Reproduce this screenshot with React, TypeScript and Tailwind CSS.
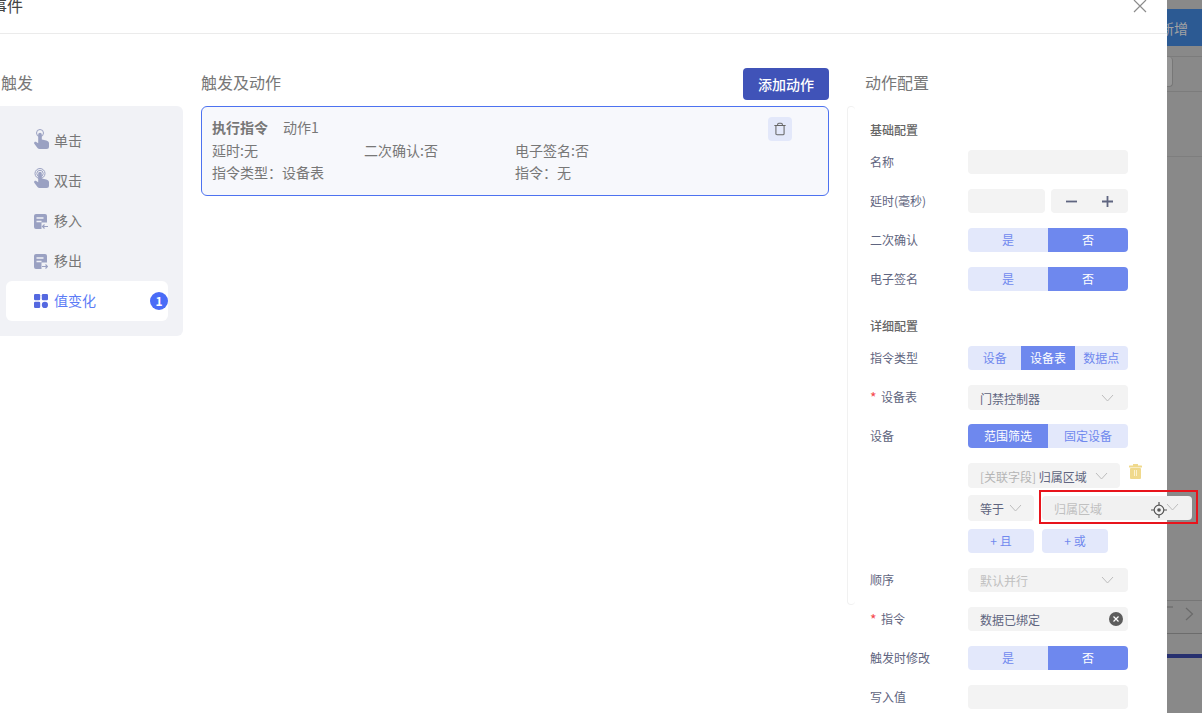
import { Trash } from 'lucide-react';

const Chevron = ({ color = '#bdbdbd' }: { color?: string }) => (
  <svg width="13" height="8" viewBox="0 0 13 8" fill="none" className="shrink-0">
    <path d="M1 1l5.5 6L12 1" stroke={color} strokeWidth="1" />
  </svg>
);

const TapIcon = ({ double }: { double?: boolean }) => (
  <svg width="15" height="20" viewBox="0 0 15 20" fill="none">
    {double && <circle cx="6" cy="5.500" r="5" stroke="#9aa1c2" strokeWidth="1" />}
    <circle cx="6" cy={double ? 5.500 : 4} r={double ? 3.200 : 3.500} stroke="#9aa1c2" strokeWidth="1" />
    <path
      d="M4.200 5.500a1.800 1.800 0 0 1 3.600 0V10.500l4.500 1c1.500.4 2.700 1.300 2.700 2.800V17.500a2.500 2.500 0 0 1-2.500 2.500H5.500a2.500 2.500 0 0 1-2-1L.3 14.800c-.8-1.200.6-2.700 1.900-1.800l2 1.300z"
      fill="#9aa1c2"
    />
  </svg>
);

const DocIcon = ({ out }: { out?: boolean }) => (
  <svg width="14" height="15" viewBox="0 0 14 15" fill="none">
    <path d="M2 0h9a2 2 0 0 1 2 2V8.500H7.500V15H2a2 2 0 0 1-2-2V2a2 2 0 0 1 2-2z" fill="#9aa1c2" />
    <path d="M2.500 4h7M2.500 7.500h5" stroke="#f1f2f6" strokeWidth="1.500" />
    {out ? (
      <path d="M8 12.500h5.500M11.500 10.500l2 2-2 2" stroke="#9aa1c2" strokeWidth="1.200" />
    ) : (
      <path d="M14 12.500H8.500M10.500 10.500l-2 2 2 2" stroke="#9aa1c2" strokeWidth="1.200" />
    )}
  </svg>
);

const GridIcon = () => (
  <svg width="14" height="14" viewBox="0 0 14 14" fill="#5468e0">
    <rect width="6.200" height="6.200" rx="1.200" />
    <rect x="7.800" width="6.200" height="6.200" rx="1.200" />
    <rect y="7.800" width="6.200" height="6.200" rx="1.200" />
    <circle cx="10.900" cy="10.900" r="3.100" />
  </svg>
);

const YellowTrash = () => (
  <svg width="13" height="15" viewBox="0 0 13 15">
    <rect x="4" width="5" height="2" fill="#f0d98c" />
    <rect y="1.500" width="13" height="2" rx="0.500" fill="#f0d98c" />
    <rect x="1" y="4" width="11" height="11" rx="1" fill="#f0d98c" />
    <rect x="5" y="6" width="1" height="6" fill="#fbf1cf" />
    <rect x="7" y="6" width="1" height="6" fill="#fbf1cf" />
  </svg>
);

const triggers = [
  { label: '单击', icon: <TapIcon />, lift: '-translate-y-[2px]' },
  { label: '双击', icon: <TapIcon double />, lift: '-translate-y-[3px]' },
  { label: '移入', icon: <DocIcon />, lift: '' },
  { label: '移出', icon: <DocIcon out />, lift: '' },
];

const Field = ({ label, required, children }: { label: string; required?: boolean; children?: React.ReactNode }) => (
  <div className="flex items-start">
    <div className="flex h-6 w-[98px] items-center text-xs text-[#5f6580]">
      {required && <span className="w-[11px] text-sm leading-none text-[#f5484d]">*</span>}
      {label}
    </div>
    {children}
  </div>
);

const Blank = () => <div className="h-6 w-40 rounded bg-[#f3f3f3]" />;

const Segments = ({ items, active }: { items: string[]; active: number }) => (
  <div className="flex h-6 w-40 overflow-hidden rounded text-xs">
    {items.map((item, i) => (
      <div
        key={item}
        className={
          i === active
            ? 'flex flex-1 items-center justify-center bg-[#6e88ee] text-white'
            : 'flex flex-1 items-center justify-center bg-[#e3e8fb] text-[#7089ee]'
        }
      >
        {item}
      </div>
    ))}
  </div>
);

const SelectBox = ({ text, muted, tall }: { text: string; muted?: boolean; tall?: boolean }) => (
  <div className={`flex w-40 items-center justify-between rounded bg-[#f3f3f3] pl-3 pr-[14px] text-xs ${tall ? 'h-[25px]' : 'h-6'}`}>
    <span className={muted ? 'pt-0.5 text-[#c0c0c0]' : 'pt-0.5 text-[#5f6580]'}>{text}</span>
    <Chevron />
  </div>
);

export default function App() {
  return (
    <div className="flex h-[713px] w-[1202px] overflow-hidden bg-[#898989] font-['Noto_Sans_CJK_SC',sans-serif]">
      <div className="h-full w-[1167px] shrink-0 bg-white">
        <div className="flex h-[34px] items-start justify-between border-b border-[#ebebeb] pr-5">
          <span className="-ml-[9px] -mt-[7px] text-base leading-6 text-[#444]">事件</span>
          <svg width="14" height="14" viewBox="0 0 14 14" className="mt-[-1px]">
            <path d="M1 1l12 12M13 1L1 13" stroke="#8c8c8c" strokeWidth="1.200" />
          </svg>
        </div>

        <div className="flex pt-[34px]">
          <div className="w-[183px] shrink-0">
            <div className="mb-[6px] flex h-8 items-center pb-[5px] pl-px text-base text-[#777]">触发</div>
            <div className="h-[230px] rounded-r-md bg-[#f1f2f6] pl-[6px] pr-[15px] pt-[15px]">
              {triggers.map((t) => (
                <div key={t.label} className="flex h-10 items-center pl-[28px] text-sm text-[#777]">
                  <div className={`flex w-5 ${t.lift}`}>{t.icon}</div>
                  <span className="-mt-0.5">{t.label}</span>
                </div>
              ))}
              <div className="flex h-10 items-center rounded-md bg-white pl-[28px] text-sm text-[#5c7cf6]">
                <div className="flex w-5">
                  <GridIcon />
                </div>
                <span className="-mt-0.5 flex-1">值变化</span>
                <span className="flex h-[18px] w-[18px] items-center justify-center rounded-full bg-[#4a6cf7] text-xs font-bold text-white">
                  1
                </span>
              </div>
            </div>
          </div>

          <div className="ml-[18px] w-[628px] shrink-0">
            <div className="mb-[6px] flex h-8 items-center justify-between text-base text-[#777]">
              <span className="-mt-[5px]">触发及动作</span>
              <button className="flex h-8 w-[86px] items-center justify-center rounded bg-[#4053b8] text-sm font-medium text-white">
                添加动作
              </button>
            </div>
            <div className="relative h-[90px] rounded-md border border-[#4d72f0] bg-[#f7f8fc] pl-[10px] pt-[9px] text-sm leading-[22px] text-[#777]">
              <div className="flex">
                <span className="w-[71px] font-bold">执行指令</span>
                <span>动作1</span>
              </div>
              <div className="mt-px flex">
                <span className="w-[152px]">延时:无</span>
                <span className="w-[151px]">二次确认:否</span>
                <span>电子签名:否</span>
              </div>
              <div className="flex">
                <span className="w-[303px]">指令类型：设备表</span>
                <span>指令：无</span>
              </div>
              <div className="absolute left-[566px] top-[10px] flex h-6 w-6 items-center justify-center rounded bg-[#e3e8fa]">
                <Trash size={14} color="#666" strokeWidth={1.800} />
              </div>
            </div>
          </div>

          <div className="ml-[18px] mt-[38px] h-[499px] w-2 shrink-0 rounded-sm border border-r-0 border-[#f1f1f1]" />

          <div className="ml-[10px] flex-1">
            <div className="mb-[6px] flex h-8 items-center pb-[5px] text-base text-[#777]">动作配置</div>
            <div className="flex flex-col pl-[5px]">
              <div className="mt-3 flex h-6 items-center text-xs font-medium text-[#666]">基础配置</div>
              <div className="mt-2">
                <Field label="名称">
                  <Blank />
                </Field>
              </div>
              <div className="mt-[15px]">
                <Field label="延时(毫秒)">
                  <div className="flex w-40 justify-between">
                    <div className="h-6 w-[77px] rounded bg-[#f3f3f3]" />
                    <div className="flex h-6 w-[77px] items-center justify-between rounded bg-[#f3f3f3] pl-[15px] pr-[15px]">
                      <svg width="11" height="11" viewBox="0 0 11 11">
                        <path d="M0 5.500h11" stroke="#5f6580" strokeWidth="1.800" />
                      </svg>
                      <svg width="11" height="11" viewBox="0 0 11 11">
                        <path d="M0 5.500h11M5.500 0v11" stroke="#5f6580" strokeWidth="1.800" />
                      </svg>
                    </div>
                  </div>
                </Field>
              </div>
              <div className="mt-[15px]">
                <Field label="二次确认">
                  <Segments items={['是', '否']} active={1} />
                </Field>
              </div>
              <div className="mt-[15px]">
                <Field label="电子签名">
                  <Segments items={['是', '否']} active={1} />
                </Field>
              </div>

              <div className="mt-[23px] flex h-6 items-center text-xs font-medium text-[#666]">详细配置</div>
              <div className="mt-2">
                <Field label="指令类型">
                  <Segments items={['设备', '设备表', '数据点']} active={1} />
                </Field>
              </div>
              <div className="mt-[15px]">
                <Field label="设备表" required>
                  <SelectBox text="门禁控制器" tall />
                </Field>
              </div>
              <div className="mt-[14px]">
                <Field label="设备">
                  <Segments items={['范围筛选', '固定设备']} active={0} />
                </Field>
              </div>

              <div className="ml-[98px] mt-[15px] flex flex-col">
                <div className="flex items-start gap-[9px]">
                  <div className="flex h-[25px] w-[152px] items-center justify-between rounded bg-[#f3f3f3] pl-3 pr-[12px] text-xs">
                    <span className="pt-0.5 text-[#5f6580]">
                      <span className="text-[#b5b5b5]">[关联字段]</span> 归属区域
                    </span>
                    <Chevron />
                  </div>
                  <div className="pt-px">
                    <YellowTrash />
                  </div>
                </div>
                <div className="mt-[7px] flex items-center gap-2">
                  <div className="flex h-[26px] w-[66px] items-center justify-between rounded bg-[#f3f3f3] pl-3 pr-3 text-xs text-[#5f6580]">
                    <span className="pt-0.5">等于</span>
                    <Chevron />
                  </div>
                  <div className="relative flex h-6 w-[150px] items-center justify-between rounded bg-[#f1f1f1] pl-3 pr-[13px] text-xs text-[#c0c0c0]">
                    <span className="pt-0.5">归属区域</span>
                    <span className="-mt-[3px]">
                      <Chevron />
                    </span>
                    <div className="pointer-events-none absolute -bottom-1 -left-[3px] -right-[6px] -top-[6px] border-2 border-[#e8141c]" />
                    <svg width="16" height="16" viewBox="0 0 16 16" fill="none" className="absolute left-[109px] top-[6px]">
                      <circle cx="8" cy="8" r="4.800" stroke="#555" strokeWidth="1.200" />
                      <circle cx="8" cy="8" r="1.800" fill="#555" />
                      <path d="M8 0v3M8 13v3M0 8h3M13 8h3" stroke="#555" strokeWidth="1.200" />
                    </svg>
                  </div>
                </div>
                <div className="mt-2 flex gap-2 text-xs text-[#7089ee]">
                  <div className="flex h-6 w-[66px] items-center justify-center rounded bg-[#e3e8fb]">+ 且</div>
                  <div className="flex h-6 w-[66px] items-center justify-center rounded bg-[#e3e8fb]">+ 或</div>
                </div>
              </div>

              <div className="mt-[15px]">
                <Field label="顺序">
                  <SelectBox text="默认并行" muted />
                </Field>
              </div>
              <div className="mt-[15px]">
                <Field label="指令" required>
                  <div className="flex h-6 w-40 items-center justify-between rounded bg-[#f3f3f3] pl-3 pr-[5px] text-xs text-[#5f6580]">
                    <span className="pt-0.5">数据已绑定</span>
                    <span className="flex h-[14px] w-[14px] items-center justify-center rounded-full bg-[#5c5c5c]">
                      <svg width="6" height="6" viewBox="0 0 6 6">
                        <path d="M.5.500l5 5M5.500.500l-5 5" stroke="#fff" strokeWidth="1.200" />
                      </svg>
                    </span>
                  </div>
                </Field>
              </div>
              <div className="mt-[15px]">
                <Field label="触发时修改">
                  <Segments items={['是', '否']} active={1} />
                </Field>
              </div>
              <div className="mt-[15px]">
                <Field label="写入值">
                  <Blank />
                </Field>
              </div>
            </div>
          </div>
        </div>
      </div>

      <div className="flex-1 overflow-hidden">
        <div className="mt-[9px] flex h-[37px] items-center overflow-hidden bg-[#2c5a93] text-sm text-[#a3a3a3]">
          <span className="-ml-[7px] whitespace-nowrap">新增</span>
        </div>
        <div className="mt-[10px] h-[36px] border-b border-t border-[#7c7c7c]">
          <div className="h-[30px] w-[6px] rounded-r-sm border-b border-r border-[#777] bg-[#969696]" />
        </div>
        <div className="mt-[64px] h-px bg-[#7e7e7e]" />
        <div className="mt-[443px] h-[33px] border-t border-[#767676]">
          <div className="mt-[5px] h-[2px] w-[6px] bg-[#767676]" />
          <div className="-mt-[1px] flex justify-end pr-[8px]">
            <svg width="9" height="14" viewBox="0 0 9 14" fill="none">
              <path d="M1 1l6.500 6L1 13" stroke="#6a6a6a" strokeWidth="1.200" />
            </svg>
          </div>
        </div>
        <div className="h-px bg-[#6c6c6c]" />
        <div className="mt-5 h-1 bg-[#27306f]" />
      </div>
    </div>
  );
}
